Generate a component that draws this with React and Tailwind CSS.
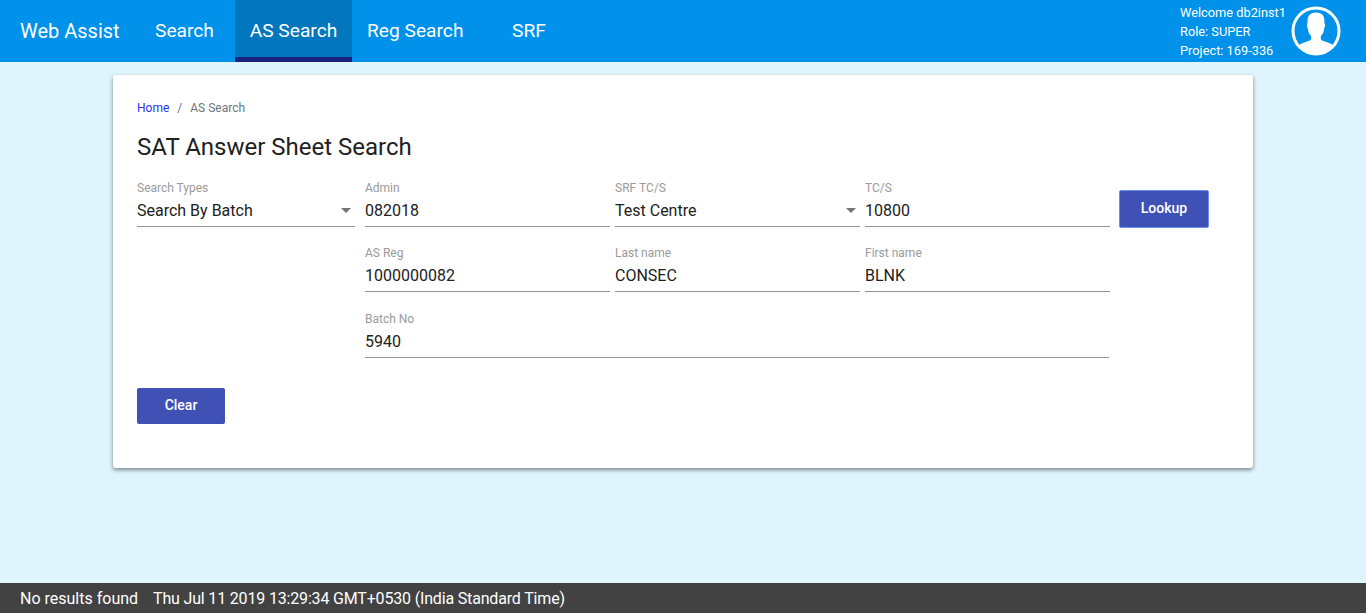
const Field = ({ label, value, select, className }) => (
  <div className={`relative h-[46px] border-b border-[#949494] ${className}`}>
    <div className="text-[12px] leading-[14px] text-[#9a9a9a]">{label}</div>
    <div className="text-[16px] leading-[19px] mt-[6px] text-[#212121]">{value}</div>
    {select && (
      <div className="absolute right-[4px] top-[27px] w-0 h-0 border-l-[5px] border-r-[5px] border-t-[5px] border-l-transparent border-r-transparent border-t-[#757575]" />
    )}
  </div>
);

const Avatar = () => (
  <svg width="50" height="50" viewBox="0 0 50 50">
    <circle cx="25" cy="25" r="23" fill="#0091EA" stroke="#fff" strokeWidth="3" />
    <path
      d="M7 40c3-3 8-4 12-5.500 1.500-1 1.500-3 1-4.500-2-2-3-5-3.300-8-.5-1-1-2-.7-3.500 0-1 .5-1.500.7-2C16 11 18 6.500 25 6.500S34 11 33.300 16.500c.2.500.7 1 .7 2 .3 1.500-.2 2.500-.7 3.500-.3 3-1.300 6-3.300 8-.5 1.500-.5 3.500 1 4.500 4 1.500 9 2.500 12 5.500-4 4.500-11 7.500-18 7.500S11 44.500 7 40z"
      fill="#fff"
    />
  </svg>
);

export default function App() {
  return (
    <div className="flex flex-col h-[613px] overflow-hidden bg-[#e0f4fe] font-['Roboto',sans-serif]">
      <header className="flex items-stretch h-[62px] bg-[#0091ea] text-white text-[19.2px]">
        <div className="flex items-center pl-[20px] w-[155px] text-[20px]">Web Assist</div>
        <div className="flex items-center w-[80px]">Search</div>
        <div className="flex items-center justify-center w-[117px] bg-[#0277bd] border-b-[5px] border-[#1a237e] pt-[5px]">
          AS Search
        </div>
        <div className="flex items-center pl-[15px] w-[160px]">Reg Search</div>
        <div className="flex items-center">SRF</div>
        <div className="ml-auto flex items-center pr-[25px]">
          <div className="text-[12.8px] leading-[19px] mr-[5px]">
            <div>Welcome db2inst1</div>
            <div>Role: SUPER</div>
            <div>Project: 169-336</div>
          </div>
          <Avatar />
        </div>
      </header>

      <main className="flex-1 px-[113px] pt-[13px]">
        <div className="h-[393px] bg-white rounded-[3px] pt-[24px] px-[24px] shadow-[0_2px_4px_rgba(0,0,0,0.45)]">
          <div className="flex items-center text-[12px] leading-[16px] pt-[1px] h-[17px] text-[#6c757d]">
            <span className="text-[#2a33ff]">Home</span>
            <span className="mx-[8px]">/</span>
            <span>AS Search</span>
          </div>
          <h1 className="text-[24px] leading-[28px] mt-[17px] text-[#212121]">SAT Answer Sheet Search</h1>

          <div className="flex mt-[20px]">
            <Field label="Search Types" value="Search By Batch" select className="w-[218px] mr-[10px]" />
            <Field label="Admin" value="082018" className="w-[245px] mr-[5px]" />
            <Field label="SRF TC/S" value="Test Centre" select className="w-[245px] mr-[5px]" />
            <Field label="TC/S" value="10800" className="w-[245px] mr-[9px]" />
            <button className="w-[90px] h-[38px] mt-[9px] pb-[2px] bg-[#3f51b5] border border-[#6c8ff0] rounded-[2px] text-white text-[14px] font-medium">
              Lookup
            </button>
          </div>
          <div className="flex mt-[18px] pl-[228px]">
            <Field label="AS Reg" value="1000000082" className="w-[245px] mr-[5px]" />
            <Field label="Last name" value="CONSEC" className="w-[245px] mr-[5px]" />
            <Field label="First name" value="BLNK" className="w-[245px]" />
          </div>
          <div className="mt-[20px] pl-[228px]">
            <Field label="Batch No" value="5940" className="w-[744px]" />
          </div>
          <button className="block w-[88px] h-[36px] mt-[30px] pb-[2px] bg-[#3f51b5] rounded-[2px] text-white text-[14px] font-medium">
            Clear
          </button>
        </div>
      </main>

      <footer className="flex items-center h-[30px] pl-[20px] pt-[1px] bg-[#424242] text-white text-[16px]">
        <span>No results found</span>
        <span className="ml-[15px] tracking-[-0.17px]">Thu Jul 11 2019 13:29:34 GMT+0530 (India Standard Time)</span>
      </footer>
    </div>
  );
}
